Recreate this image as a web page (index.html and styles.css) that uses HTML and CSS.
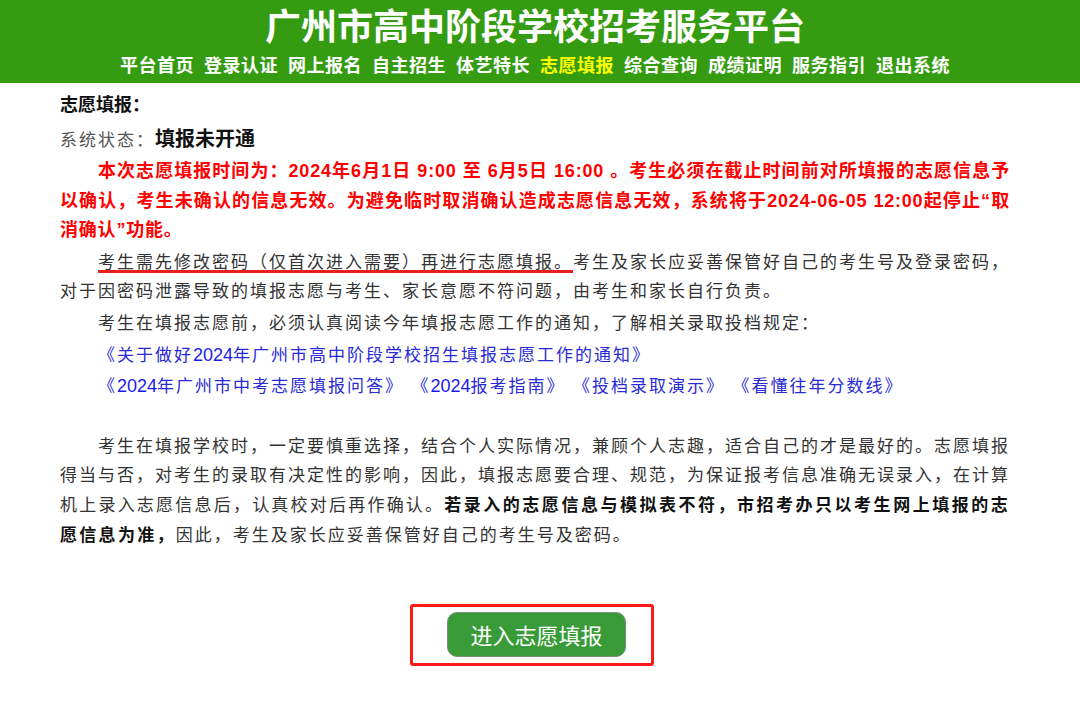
FILE: index.html
```html
<!DOCTYPE html>
<html lang="zh-CN">
<head>
<meta charset="utf-8">
<title>广州市高中阶段学校招考服务平台</title>
<link rel="stylesheet" href="styles.css">
</head>
<body>
<header class="top">
  <h1 class="title">广州市高中阶段学校招考服务平台</h1>
  <nav class="nav">
    <a class="nav-item">平台首页</a>
    <a class="nav-item">登录认证</a>
    <a class="nav-item">网上报名</a>
    <a class="nav-item">自主招生</a>
    <a class="nav-item">体艺特长</a>
    <a class="nav-item active">志愿填报</a>
    <a class="nav-item">综合查询</a>
    <a class="nav-item">成绩证明</a>
    <a class="nav-item">服务指引</a>
    <a class="nav-item">退出系统</a>
  </nav>
</header>
<main class="content">
  <h2 class="section-title">志愿填报：</h2>
  <div class="status"><span class="status-label">系统状态：</span><span class="status-value">填报未开通</span></div>
  <p class="notice">本次志愿填报时间为：2024年6月1日 9:00 至 6月5日 16:00 。考生必须在截止时间前对所填报的志愿信息予以确认，考生未确认的信息无效。为避免临时取消确认造成志愿信息无效，系统将于2024-06-05 12:00起停止“取消确认”功能。</p>
  <p class="text"><span class="mark">考生需先修改密码（仅首次进入需要）再进行志愿填报。</span>考生及家长应妥善保管好自己的考生号及登录密码，对于因密码泄露导致的填报志愿与考生、家长意愿不符问题，由考生和家长自行负责。</p>
  <p class="text">考生在填报志愿前，必须认真阅读今年填报志愿工作的通知，了解相关录取投档规定：</p>
  <p class="text links"><a class="link">《关于做好<span class="num">2024</span>年广州市高中阶段学校招生填报志愿工作的通知》</a></p>
  <p class="text links"><a class="link">《<span class="num">2024</span>年广州市中考志愿填报问答》</a><a class="link">《<span class="num">2024</span>报考指南》</a><a class="link">《投档录取演示》</a><a class="link">《看懂往年分数线》</a></p>
  <p class="text advice">考生在填报学校时，一定要慎重选择，结合个人实际情况，兼顾个人志趣，适合自己的才是最好的。志愿填报得当与否，对考生的录取有决定性的影响，因此，填报志愿要合理、规范，为保证报考信息准确无误录入，在计算机上录入志愿信息后，认真校对后再作确认。<strong class="strong">若录入的志愿信息与模拟表不符，市招考办只以考生网上填报的志愿信息为准，</strong>因此，考生及家长应妥善保管好自己的考生号及密码。</p>
  <div class="enter-wrap">
    <div class="enter-box"><button class="enter-btn" type="button">进入志愿填报</button></div>
  </div>
</main>
</body>
</html>
```

FILE: styles.css
```css
body {
  margin: 0;
  background: #ffffff;
  font-family: "Liberation Sans", "Noto Sans CJK SC", sans-serif;
}

.top {
  background: #359c12;
  padding: 6px 10px 5px 0;
  text-align: center;
}

.title {
  margin: 0;
  font-size: 36px;
  line-height: 44px;
  font-weight: 700;
  color: #ffffff;
}

.nav {
  margin-top: 4px;
  display: flex;
  justify-content: center;
  gap: 10px;
  font-size: 18px;
  line-height: 24px;
  font-weight: 700;
  letter-spacing: 0.5px;
}

.nav-item {
  color: #ffffff;
}

.nav-item.active {
  color: #ffff00;
}

.content {
  margin-left: 60px;
  width: 950px;
}

.section-title {
  margin: 9px 0 0;
  font-size: 18px;
  line-height: 26px;
  font-weight: 700;
  color: #111111;
}

.status {
  margin-top: 6px;
  line-height: 30px;
}

.status-label {
  font-size: 17px;
  letter-spacing: 2px;
  color: #555555;
}

.status-value {
  font-size: 20px;
  font-weight: 700;
  color: #111111;
}

.notice {
  margin: 1px 0 2px;
  text-indent: 38px;
  font-size: 18px;
  line-height: 29.6px;
  font-weight: 700;
  letter-spacing: 0.8px;
  color: #ff0000;
  text-align: justify;
}

.text {
  margin: 0 0 2px;
  text-indent: 38px;
  font-size: 17px;
  line-height: 29.6px;
  letter-spacing: 2px;
  color: #333333;
  text-align: justify;
}

.mark {
  text-decoration: underline;
  text-decoration-color: #e8201c;
  text-decoration-thickness: 3px;
  text-underline-offset: 2px;
}

.links {
  text-align: left;
}

.link {
  color: #2a2ad6;
  margin-right: 16px;
}

.num {
  font-size: 18px;
  letter-spacing: 0;
  color: #1a1ae8;
}

.advice {
  margin-top: 30px;
}

.strong {
  font-weight: 700;
  letter-spacing: 2.3px;
  color: #111111;
}

.enter-wrap {
  margin-top: 54px;
  display: flex;
  justify-content: center;
}

.enter-box {
  border: 3px solid #ff1a1a;
  border-radius: 3px;
  padding: 5px 25px 6px 34px;
  margin-right: 6px;
}

.enter-btn {
  display: block;
  width: 179px;
  height: 45px;
  border: 1px solid #76907a;
  border-radius: 10px;
  background: #389b38;
  color: #ffffff;
  font-family: "Noto Sans CJK SC", sans-serif;
  font-size: 22px;
  line-height: 43px;
  padding: 0;
}
```
